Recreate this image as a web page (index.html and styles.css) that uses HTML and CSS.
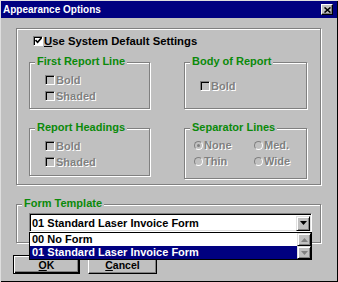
FILE: index.html
```html
<!DOCTYPE html>
<html lang="en">
<head>
    <meta charset="UTF-8">
    <title>Appearance Options</title>
    <link rel="stylesheet" href="styles.css">
</head>
<body>

    <div class="window">
        <div class="titlebar">
            <span class="title">Appearance Options</span>
            <span class="close">
                <svg width="7" height="6" viewBox="0 0 7 6"><path d="M0.5 0.5 L6.5 5.5 M6.5 0.5 L0.5 5.5" stroke="#000" stroke-width="1.6"/></svg>
            </span>
        </div>

        <div class="content">
            <div class="panel etched">
                <div class="check-row">
                    <span class="box checked">
                        <svg width="7" height="7" viewBox="0 0 7 7"><path d="M0.5 3 L2.6 5.3 L6.5 0.8" fill="none" stroke="#000" stroke-width="1.6"/></svg>
                    </span>
                    <span><u>U</u>se System Default Settings</span>
                </div>

                <div class="groups">
                    <div class="group etched first-line">
                        <span class="legend">First Report Line</span>
                        <div class="opt disabled"><span class="box"></span>Bold</div>
                        <div class="opt disabled"><span class="box"></span>Shaded</div>
                    </div>
                    <div class="group etched body-report">
                        <span class="legend">Body of Report</span>
                        <div class="opt disabled"><span class="box"></span>Bold</div>
                    </div>
                    <div class="group etched headings">
                        <span class="legend">Report Headings</span>
                        <div class="opt disabled"><span class="box"></span>Bold</div>
                        <div class="opt disabled"><span class="box"></span>Shaded</div>
                    </div>
                    <div class="group etched separators">
                        <span class="legend">Separator Lines</span>
                        <div class="opt disabled"><span class="radio on"></span>None</div>
                        <div class="opt disabled"><span class="radio"></span>Med.</div>
                        <div class="opt disabled"><span class="radio"></span>Thin</div>
                        <div class="opt disabled"><span class="radio"></span>Wide</div>
                    </div>
                </div>
            </div>

            <div class="group etched form-template">
                <span class="legend">Form Template</span>
                <div class="combo">
                    <div class="combo-field">
                        <span>01 Standard Laser Invoice Form</span>
                        <span class="arrow-btn">
                            <svg width="7" height="4" viewBox="0 0 7 4"><path d="M0 0 H7 L3.5 4 Z" fill="#000"/></svg>
                        </span>
                    </div>
                    <div class="dropdown">
                        <div class="rows">
                            <div class="item">00 No Form</div>
                            <div class="item selected">01 Standard Laser Invoice Form</div>
                        </div>
                        <div class="scrollbar">
                            <span class="sbtn">
                                <svg width="7" height="4" viewBox="0 0 7 4"><path d="M0 4 H7 L3.5 0 Z" fill="#808080"/></svg>
                            </span>
                            <span class="sbtn">
                                <svg width="7" height="4" viewBox="0 0 7 4"><path d="M0 0 H7 L3.5 4 Z" fill="#808080"/></svg>
                            </span>
                        </div>
                    </div>
                </div>
            </div>

            <div class="buttons">
                <div class="button default"><span><u>O</u>K</span></div>
                <div class="button"><span><u>C</u>ancel</span></div>
            </div>
        </div>
    </div>

</body>
</html>
```

FILE: styles.css
```css
body {
    margin: 0;
    background-color: #c0c0c0;
    font-family: "Liberation Sans", Arial, sans-serif;
    font-size: 11px;
    font-weight: bold;
    color: #000;
}

.window {
    width: 338px;
    height: 282px;
    box-sizing: border-box;
    padding: 1px;
    background: #c0c0c0;
    box-shadow: inset 1px 1px 0 #dfdfdf, inset -1px -1px 0 #000;
}

.titlebar {
    height: 17px;
    background: #000080;
    color: white;
    display: flex;
    align-items: center;
    justify-content: space-between;
    padding: 0 4px 0 2px;
}

.title {
    font-size: 10px;
}

.close {
    width: 12px;
    height: 11px;
    box-sizing: border-box;
    background: #c0c0c0;
    border: 1px solid;
    border-color: #fff #000 #000 #fff;
    box-shadow: inset -1px -1px 0 #808080;
    display: flex;
    align-items: center;
    justify-content: center;
}

.content {
    padding: 10px 0 0 12px;
}

.etched {
    border: 1px solid #808080;
    box-shadow: inset 1px 1px 0 #fff, 1px 1px 0 #fff;
}

.panel {
    width: 305px;
    height: 157px;
    box-sizing: border-box;
    margin-left: 3px;
    padding: 5px 0 0 12px;
}

.check-row {
    display: flex;
    align-items: center;
    gap: 1px;
    height: 13px;
    margin-left: 4px;
    font-size: 11.3px;
}

.box {
    width: 10px;
    height: 10px;
    box-sizing: border-box;
    border: 1px solid;
    border-color: #808080 #fff #fff #808080;
    box-shadow: inset 1px 1px 0 #000;
    background: #c0c0c0;
    display: flex;
    align-items: center;
    justify-content: center;
    flex-shrink: 0;
}

.box.checked {
    background: #fff;
}

.radio {
    width: 9px;
    height: 9px;
    box-sizing: border-box;
    border-radius: 50%;
    border: 1px solid;
    border-color: #808080 #fff #fff #808080;
    background: #c0c0c0;
    display: flex;
    align-items: center;
    justify-content: center;
    flex-shrink: 0;
}

.radio.on::after {
    content: "";
    width: 3px;
    height: 3px;
    border-radius: 50%;
    background: #808080;
}

.groups {
    display: grid;
    grid-template-columns: 121px 123px;
    column-gap: 34px;
    row-gap: 19px;
    margin-top: 15px;
    align-items: start;
}

.group {
    position: relative;
    box-sizing: border-box;
}

.legend {
    position: absolute;
    top: -8px;
    left: 5px;
    padding: 0 2px;
    background: #c0c0c0;
    color: #0a8a0a;
    line-height: 13px;
    white-space: nowrap;
}

.first-line {
    height: 47px;
    padding: 9px 0 0 15px;
}

.body-report {
    height: 47px;
    padding: 15px 0 0 15px;
}

.headings {
    height: 48px;
    padding: 9px 0 0 15px;
}

.separators {
    height: 51px;
    padding: 8px 0 0 9px;
    display: grid;
    grid-template-columns: 60px 60px;
    align-content: start;
}

.opt {
    display: flex;
    align-items: center;
    gap: 1px;
    height: 16px;
}

.disabled {
    color: #808080;
    text-shadow: 1px 1px 0 #fff;
}

.form-template {
    width: 305px;
    height: 39px;
    margin: 19px 0 0 3px;
    padding: 8px 0 0 12px;
}

.combo {
    position: relative;
    width: 283px;
    height: 19px;
}

.combo-field {
    height: 19px;
    box-sizing: border-box;
    background: #fff;
    border: 1px solid;
    border-color: #808080 #fff #fff #808080;
    box-shadow: inset 1px 1px 0 #000, inset -1px -1px 0 #dfdfdf;
    display: flex;
    align-items: center;
    justify-content: space-between;
    padding: 1px 1px 0 2px;
}

.arrow-btn, .sbtn {
    width: 14px;
    height: 15px;
    box-sizing: border-box;
    background: #c0c0c0;
    border: 1px solid;
    border-color: #dfdfdf #000 #000 #dfdfdf;
    box-shadow: inset 1px 1px 0 #fff, inset -1px -1px 0 #808080;
    display: flex;
    align-items: center;
    justify-content: center;
}

.dropdown {
    position: absolute;
    top: 19px;
    left: 0;
    width: 283px;
    height: 28px;
    box-sizing: border-box;
    border: 1px solid #000;
    background: #fff;
    display: flex;
    z-index: 2;
}

.rows {
    flex: 1;
}

.item {
    height: 13px;
    line-height: 13px;
    padding-left: 2px;
    white-space: nowrap;
}

.item.selected {
    background: #000080;
    color: white;
}

.scrollbar {
    width: 14px;
    display: flex;
    flex-direction: column;
}

.sbtn {
    height: 13px;
}

.buttons {
    display: flex;
    gap: 8px;
    margin-top: 12px;
}

.button {
    width: 67px;
    height: 19px;
    box-sizing: border-box;
    border: 1px solid;
    border-color: #fff #000 #000 #fff;
    box-shadow: inset -1px -1px 0 #808080;
    display: flex;
    align-items: center;
    justify-content: center;
    font-size: 10.5px;
}

.button + .button {
    width: 69px;
}

.button.default {
    border-color: #000;
    box-shadow: inset 1px 1px 0 #fff, inset -1px -1px 0 #000, inset -2px -2px 0 #808080;
}
```
